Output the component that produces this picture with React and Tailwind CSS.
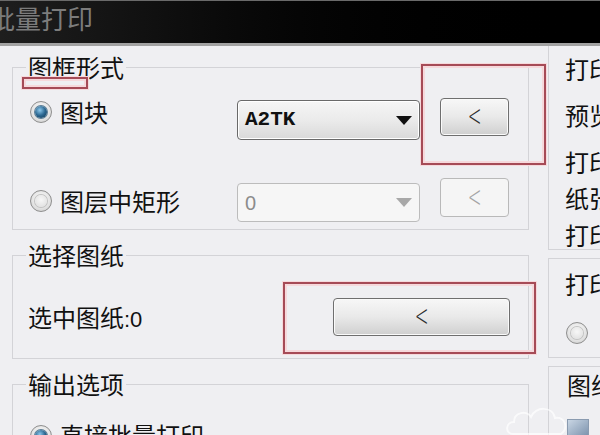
import React from 'react';

const cjk = "font-['Noto_Sans_CJK_SC','Noto_Sans',sans-serif]";

function Radio({ checked }) {
  return (
    <div className="w-[22px] h-[22px] rounded-full border border-[#8e8e8e] bg-[radial-gradient(circle_at_50%_40%,#ffffff,#e2e2e2_60%,#c8c8c8)] flex items-center justify-center shrink-0">
      {checked ? (
        <div className="w-[12px] h-[12px] rounded-full bg-[radial-gradient(circle_at_40%_35%,#8cc8ec,#2a6690_50%,#10344f)] shadow-[0_0_0_1px_#5a7d96]" />
      ) : (
        <div className="w-[12px] h-[12px] rounded-full bg-[radial-gradient(circle_at_50%_40%,#f7f7f7,#dcdcdc)] shadow-[0_0_0_1px_#c2c2c2]" />
      )}
    </div>
  );
}

function Chevron({ disabled }) {
  return (
    <span
      className={`font-['DejaVu_Sans',sans-serif] text-[30px] leading-none font-light scale-x-[0.55] -mt-[2px] ${
        disabled ? 'text-[#a4a4a4]' : 'text-[#2e2e2e]'
      }`}
    >
      &lt;
    </span>
  );
}

function PickButton({ disabled, className }) {
  return (
    <div
      className={`rounded-[4px] border flex items-center justify-center ${
        disabled
          ? 'border-[#b9b9b9] bg-[#f5f5f5]'
          : 'border-[#6f6f6f] bg-linear-to-b from-[#f7f7f7] via-[#e9e9e9] to-[#cfcfcf] shadow-[inset_0_0_0_1px_#fafafa]'
      } ${className}`}
    >
      <Chevron disabled={disabled} />
    </div>
  );
}

function Combo({ value, disabled, className }) {
  return (
    <div
      className={`w-[183px] rounded-[4px] border flex items-center pl-[7px] pr-[7px] ${
        disabled
          ? 'border-[#bcbcbc] bg-[#f6f6f6]'
          : 'border-[#696969] bg-linear-to-b from-[#f5f5f5] via-[#ebebeb] to-[#d9d9d9] shadow-[inset_0_0_0_1px_#ffffff]'
      } ${className}`}
    >
      {disabled ? (
        <span className="font-['Liberation_Sans',sans-serif] text-[20px] text-[#8c8c8c]">{value}</span>
      ) : (
        <span className="font-['Liberation_Mono',monospace] font-bold text-[21px] text-[#111]">{value}</span>
      )}
      <svg className="ml-auto" width="16" height="9" viewBox="0 0 16 9">
        <polygon points="0,0 16,0 8,9" fill={disabled ? '#a8a8a8' : '#111'} />
      </svg>
    </div>
  );
}

function Note({ className }) {
  return (
    <div
      className={`absolute border-2 border-[#a64b57] shadow-[inset_0_0_0_2px_#f6d9dc,0_0_0_1px_#f6d9dc] ${className}`}
    />
  );
}

export default function App() {
  return (
    <div className={`relative w-[600px] h-[435px] overflow-hidden bg-[#efeff2] flex flex-col ${cjk} text-[#111]`}>
      {/* title bar */}
      <div className="h-[46px] shrink-0 bg-linear-to-r from-[#1e1e1e] via-[#050505] to-black border-t border-[#6a6a6a] border-b-[3px] border-b-[#a2a2a2] overflow-hidden">
        <div className="-ml-[11px] text-[26px] leading-[34px] text-[#7c7c7c] whitespace-nowrap">批量打印</div>
      </div>

      <div className="flex flex-1 min-h-0">
        {/* left column */}
        <div className="w-[548px] shrink-0 pl-[12px] flex flex-col">
          <fieldset className="mt-[7px] w-[517px] h-[177px] shrink-0 border border-[#d3d3d7]">
            <legend className="ml-[13px] px-[2px] text-[24px] leading-[28px]">图框形式</legend>
            <div className="pt-[17px] pl-[17px]">
              <div className="flex items-start h-[42px]">
                <div className="w-[207px] flex items-start">
                  <div className="mt-[3px]"><Radio checked /></div>
                  <span className="ml-[8px] text-[24px] leading-[28px]">图块</span>
                </div>
                <Combo value="A2TK" className="mt-[2px] h-[40px]" />
                <PickButton className="ml-[20px] w-[69px] h-[38px]" />
              </div>
              <div className="flex items-start mt-[38px] h-[44px]">
                <div className="w-[207px] flex items-start">
                  <div className="mt-[12px]"><Radio /></div>
                  <span className="ml-[8px] mt-[9px] text-[24px] leading-[28px]">图层中矩形</span>
                </div>
                <Combo value="0" disabled className="mt-[5px] h-[39px]" />
                <PickButton disabled className="ml-[20px] w-[69px] h-[39px]" />
              </div>
            </div>
          </fieldset>

          <fieldset className="mt-[11px] w-[517px] h-[118px] shrink-0 border border-[#d3d3d7]">
            <legend className="ml-[13px] px-[2px] text-[24px] leading-[28px]">选择图纸</legend>
            <div className="pt-[29px] flex items-start">
              <span className="ml-[15px] mt-[5px] text-[24px] leading-[28px]">
                选中图纸<span className="font-['Liberation_Sans',sans-serif] text-[22px]">:0</span>
              </span>
              <PickButton className="ml-auto mr-[18px] w-[177px] h-[38px]" />
            </div>
          </fieldset>

          <fieldset className="mt-[11px] w-[517px] h-[120px] shrink-0 border border-[#d3d3d7]">
            <legend className="ml-[13px] px-[2px] text-[24px] leading-[28px]">输出选项</legend>
            <div className="pt-[23px] pl-[17px] flex items-start">
              <div className="mt-[4px]"><Radio checked /></div>
              <span className="ml-[8px] text-[24px] leading-[28px]">直接批量打印</span>
            </div>
          </fieldset>
        </div>

        {/* right column */}
        <div className="flex-1 flex flex-col overflow-hidden whitespace-nowrap text-[24px] leading-[28px]">
          <div className="h-[204px] shrink-0 border-l border-b border-[#d3d3d7] pl-[16px] pt-[9px] w-[90px]">
            <div>打印机</div>
            <div className="mt-[18px]">预览</div>
            <div className="mt-[19px]">打印</div>
            <div className="mt-[8px]">纸张</div>
            <div className="mt-[9px]">打印</div>
          </div>
          <div className="mt-[8px] h-[100px] shrink-0 border-l border-t border-b border-[#d3d3d7] pl-[16px] pt-[11px] w-[90px]">
            <div>打印</div>
            <div className="mt-[24px] ml-[1px]"><Radio /></div>
          </div>
          <div className="mt-[8px] flex-1 border-l border-t border-[#d3d3d7] pl-[18px] pt-[4px] w-[90px]">
            <div>图纸</div>
            <div className="mt-[20px] w-[22px] h-[18px] bg-linear-to-br from-[#c9d6e4] to-[#7d93ad] border border-[#8a9bb0]" />
          </div>
        </div>
      </div>

      {/* watermark cloud */}
      <svg className="absolute left-[505px] top-[400px] opacity-70" width="70" height="35" viewBox="0 0 70 35">
        <path d="M8 34 C0 34 0 22 9 22 C9 12 22 10 26 17 C30 6 48 6 50 18 C60 16 64 28 56 34 Z" fill="none" stroke="#ffffff" strokeWidth="2" />
      </svg>

      <Note className="left-[22px] top-[77px] w-[66px] h-[12px]" />
      <Note className="left-[421px] top-[64px] w-[125px] h-[101px]" />
      <Note className="left-[283px] top-[282px] w-[253px] h-[72px]" />
    </div>
  );
}
